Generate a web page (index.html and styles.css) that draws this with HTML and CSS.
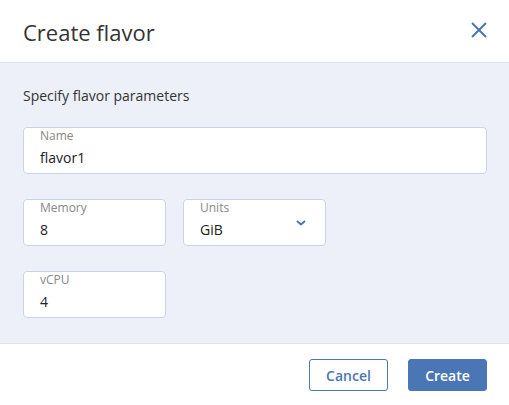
FILE: index.html
```html
<!DOCTYPE html>
<html>
<head>
<meta charset="utf-8">
<link rel="stylesheet" href="styles.css">
</head>
<body>
<div class="dialog">
  <div class="header">
    <div class="title">Create flavor</div>
    <svg class="close" width="16" height="16" viewBox="0 0 16 16"><path d="M1 1 L15 15 M15 1 L1 15" stroke="#4a76b5" stroke-width="2" fill="none"/></svg>
  </div>
  <div class="content">
    <div class="subtitle">Specify flavor parameters</div>
    <div class="field wide">
      <div class="label">Name</div>
      <div class="value">flavor1</div>
    </div>
    <div class="row">
      <div class="field">
        <div class="label">Memory</div>
        <div class="value">8</div>
      </div>
      <div class="field select">
        <div class="label">Units</div>
        <div class="value">GiB</div>
        <svg class="chevron" width="10" height="6" viewBox="0 0 10 6"><path d="M1 1 L5 4.5 L9 1" stroke="#4a76b5" stroke-width="2" fill="none"/></svg>
      </div>
    </div>
    <div class="row">
      <div class="field">
        <div class="label">vCPU</div>
        <div class="value">4</div>
      </div>
    </div>
  </div>
  <div class="footer">
    <button class="btn secondary">Cancel</button>
    <button class="btn primary">Create</button>
  </div>
</div>
</body>
</html>
```
FILE: styles.css
```css
* { box-sizing: border-box; }
html, body { margin: 0; padding: 0; background: #fff; }
body { font-family: "Open Sans", "Noto Sans", sans-serif; color: #222; }
.dialog { width: 509px; height: 405px; display: flex; flex-direction: column; }
.header {
  height: 63px;
  padding: 0 22px 0 23px;
  display: flex;
  align-items: center;
  justify-content: space-between;
  border-bottom: 1px solid #dde3ee;
}
.title { font-size: 22px; line-height: 28px; color: #333; margin-top: 1px; }
.close { display: block; margin-top: -2px; }
.content {
  background: #edf0f8;
  height: 280px;
  padding: 23px 22px 0 23px;
  display: flex;
  flex-direction: column;
  gap: 25px;
}
.subtitle { font-size: 14px; line-height: 19px; color: #333; margin-bottom: -3px; }
.row { display: flex; gap: 17px; }
.field {
  position: relative;
  width: 143px;
  height: 47px;
  background: #fff;
  border: 1px solid #c8d4e8;
  border-radius: 4px;
  padding: 1px 16px 0 16px;
}
.field.wide { width: 464px; }
.label { font-size: 12px; line-height: 14px; color: #888; }
.value { font-size: 14px; line-height: 20px; margin-top: 5px; color: #222; }
.chevron { position: absolute; right: 19px; top: 20px; }
.footer {
  border-top: 1px solid #dde3ee;
  flex: 1;
  display: flex;
  justify-content: flex-end;
  align-items: flex-start;
  gap: 20px;
  padding: 15px 22px 0 0;
}
.btn {
  height: 32px;
  width: 79px;
  border-radius: 3px;
  font-family: "Open Sans", "Noto Sans", sans-serif;
  font-size: 14px;
  font-weight: 600;
  padding: 0;
  border: 1px solid #4a76b5;
}
.secondary { background: #fff; color: #4a76b5; }
.primary { background: #4a76b5; color: #fff; }
```
